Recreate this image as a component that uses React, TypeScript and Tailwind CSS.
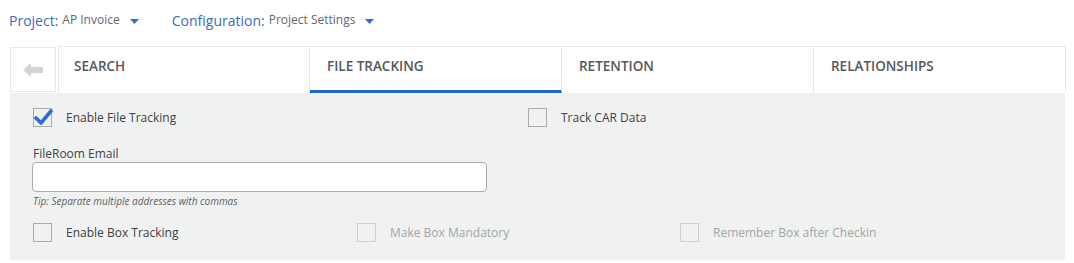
import React from 'react';

const font = { fontFamily: '"Open Sans", "Liberation Sans", sans-serif' };

function Caret() {
  return (
    <svg width="9" height="5" viewBox="0 0 9 5" className="ml-[10px] mt-[2px]">
      <path d="M0 0 H9 L4.5 5 Z" fill="#2f6fc4" />
    </svg>
  );
}

function Checkbox({ checked, disabled, label }: { checked?: boolean; disabled?: boolean; label: string }) {
  return (
    <div className="flex items-center">
      <div
        className={
          'relative w-[19px] h-[19px] border bg-[#f0f2f2] ' +
          (disabled ? 'border-[#cfd1d2]' : 'border-[#a9abad]')
        }
      >
        {checked && (
          <svg width="20" height="17" viewBox="0 0 20 17" className="absolute left-[0px] top-[0px]">
            <path d="M2 9 L7 14 L17 2" stroke="#2d6fd0" strokeWidth="3.6" fill="none" strokeLinecap="round" strokeLinejoin="round" />
          </svg>
        )}
      </div>
      <span className={'ml-[14px] text-[12px] ' + (disabled ? 'text-[#a3a5a7]' : 'text-[#3f4143]')}>{label}</span>
    </div>
  );
}

export default function App() {
  const tabs = ['SEARCH', 'FILE TRACKING', 'RETENTION', 'RELATIONSHIPS'];
  return (
    <div className="w-[1074px] h-[263px] bg-white" style={font}>
      {/* Header */}
      <div className="flex items-center h-[42px] pl-[9px] pb-[2px]">
        <div className="flex items-center">
          <span className="text-[14px] text-[#3a6db5]">Project:</span>
          <span className="ml-[4px] text-[12px] text-[#666869]">AP Invoice</span>
          <Caret />
        </div>
        <div className="flex items-center ml-[33px]">
          <span className="text-[14px] text-[#3a6db5]">Configuration:</span>
          <span className="ml-[4px] text-[12px] text-[#666869]">Project Settings</span>
          <Caret />
        </div>
      </div>

      {/* Tabs */}
      <div className="flex ml-[10px] mt-[4px] h-[47px]">
        <div className="w-[46px] h-[45px] mt-[1px] border border-[#e8e9ea] flex items-center justify-center">
          <svg width="20" height="14" viewBox="0 0 20 14">
            <path d="M0 7 L8 0 V4 H20 V10 H8 V14 Z" fill="#d2d3d4" />
          </svg>
        </div>
        <div className="ml-[2px] flex">
          {tabs.map((t, i) => (
            <div
              key={t}
              className={
                'w-[252px] h-[47px] border-t border-r border-[#e8e9ea] pt-[9px] text-[13.5px] font-semibold text-[#565859] ' +
                (i === 0 ? 'border-l pl-[15px] ' : 'pl-[17px] ') +
                (i === 1 ? 'border-b-[3px] border-b-[#1f66c9] bg-white' : '')
              }
            >
              {t}
            </div>
          ))}
        </div>
      </div>

      {/* Panel */}
      <div className="ml-[10px] w-[1055px] h-[167px] bg-[#f0f2f2] pl-[23px] pt-[15px]">
        <div className="flex">
          <div className="w-[495px]">
            <Checkbox checked label="Enable File Tracking" />
          </div>
          <Checkbox label="Track CAR Data" />
        </div>
        <div className="mt-[19px] text-[12px] text-[#3f4143] leading-[16px]">FileRoom Email</div>
        <input className="block w-[455px] h-[30px] bg-white border border-[#a9abad] rounded-[4px] -ml-[1px]" />
        <div className="mt-[2px] text-[10px] italic text-[#5d5f61] leading-[14px]">Tip: Separate multiple addresses with commas</div>
        <div className="flex mt-[15px]">
          <div className="w-[324px]">
            <Checkbox label="Enable Box Tracking" />
          </div>
          <div className="w-[323px]">
            <Checkbox disabled label="Make Box Mandatory" />
          </div>
          <Checkbox disabled label="Remember Box after Checkin" />
        </div>
      </div>
    </div>
  );
}
